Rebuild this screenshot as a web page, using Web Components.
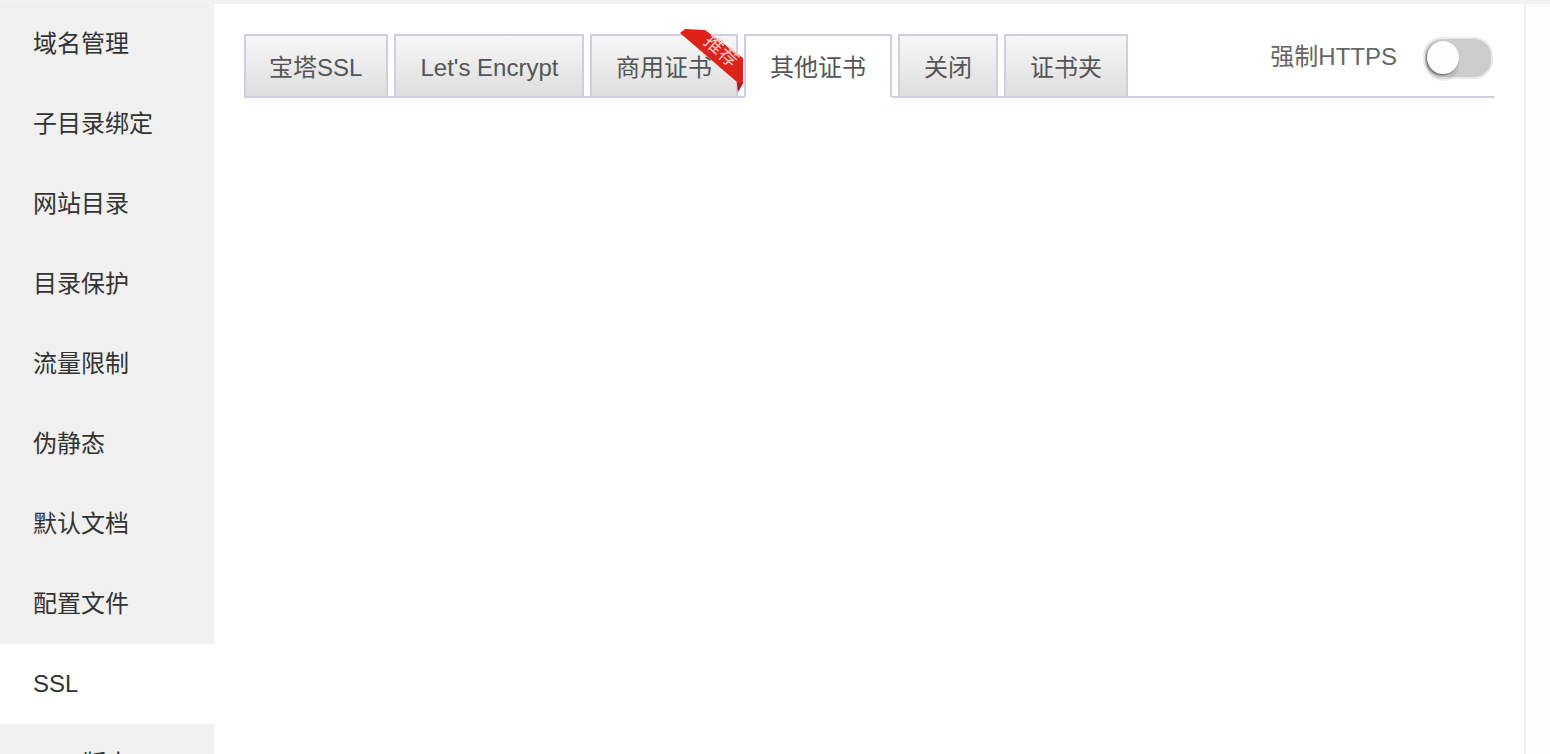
<!DOCTYPE html>
<html lang="zh-CN">
<head>
<meta charset="utf-8">
<title>SSL</title>
<style>
  html, body { margin: 0; height: 100%; background: #fcfcfc; overflow: hidden; }
  body { font-family: "Liberation Sans", "Noto Sans CJK SC", sans-serif; }
</style>
</head>
<body>
<site-panel>
  <side-item slot="nav">域名管理</side-item>
  <side-item slot="nav">子目录绑定</side-item>
  <side-item slot="nav">网站目录</side-item>
  <side-item slot="nav">目录保护</side-item>
  <side-item slot="nav">流量限制</side-item>
  <side-item slot="nav">伪静态</side-item>
  <side-item slot="nav">默认文档</side-item>
  <side-item slot="nav">配置文件</side-item>
  <side-item slot="nav" active>SSL</side-item>
  <side-item slot="nav">PHP版本</side-item>
  <tab-bar>
    <tab-item style="width: 144px; padding-left: 23px">宝塔SSL</tab-item>
    <tab-item style="padding: 0 23.5px 0 24.5px">Let's Encrypt</tab-item>
    <tab-item ribbon>商用证书</tab-item>
    <tab-item active>其他证书</tab-item>
    <tab-item>关闭</tab-item>
    <tab-item>证书夹</tab-item>
    <toggle-switch slot="end">强制HTTPS</toggle-switch>
  </tab-bar>
</site-panel>

<script>
class SitePanel extends HTMLElement {
  constructor() {
    super();
    this.attachShadow({ mode: "open" });
    this.shadowRoot.innerHTML = `
    <style>
      :host {
        display: flex;
        flex-direction: column;
        height: 754px;
        overflow: hidden;
      }
      .topLine {
        height: 4px;
        background: #f2f2f2;
        flex-shrink: 0;
      }
      .panel {
        display: flex;
        width: 1526px;
        height: 750px;
        box-sizing: border-box;
        background: #fff;
        border-right: 2px solid #eee;
      }
      nav {
        width: 214px;
        flex-shrink: 0;
        background: #f0f0f0;
      }
      main {
        flex: 1;
        padding: 30px 30px 0;
      }
    </style>
    <div class="topLine"></div>
    <div class="panel">
      <nav><slot name="nav"></slot></nav>
      <main><slot></slot></main>
    </div>
    `;
  }
}

class SideItem extends HTMLElement {
  constructor() {
    super();
    this.attachShadow({ mode: "open" });
    this.shadowRoot.innerHTML = `
    <style>
      :host {
        display: block;
        height: 80px;
        line-height: 80px;
        padding-left: 33px;
        font-size: 24px;
        color: #333;
        white-space: nowrap;
      }
      :host([active]) {
        background: #fff;
      }
    </style>
    <slot></slot>
    `;
  }
}

class TabBar extends HTMLElement {
  constructor() {
    super();
    this.attachShadow({ mode: "open" });
    this.shadowRoot.innerHTML = `
    <style>
      :host {
        display: flex;
        gap: 6px;
        height: 64px;
        box-sizing: border-box;
        border-bottom: 2px solid #cfcde0;
      }
      .end {
        margin-left: auto;
      }
    </style>
    <slot></slot>
    <div class="end"><slot name="end"></slot></div>
    `;
  }
}

class TabItem extends HTMLElement {
  constructor() {
    super();
    this.attachShadow({ mode: "open" });
    const ribbon = this.hasAttribute("ribbon") ? `
      <div class="ribbon">
        <svg width="66" height="68" viewBox="0 0 66 68">
          <path d="M0 5 L5 1 L25 2 L63 30 L63 55 L58 64 L57 54 Z" fill="#dc2219"/>
          <path d="M57 54 L63 55 L58 64 Z" fill="#b81a14"/>
        </svg>
        <span>推荐</span>
      </div>` : "";
    this.shadowRoot.innerHTML = `
    <style>
      :host {
        display: block;
        position: relative;
        height: 64px;
        box-sizing: border-box;
        padding: 0 24px;
        line-height: 64px;
        font-size: 24px;
        color: #555;
        white-space: nowrap;
        border: 2px solid #cfcde0;
        background: linear-gradient(#f7f7f7, #dedede);
      }
      :host([active]) {
        background: #fff;
        border-bottom-color: #fff;
      }
      .ribbon {
        position: absolute;
        left: 88px;
        top: -8px;
        width: 66px;
        height: 68px;
        line-height: normal;
      }
      .ribbon svg {
        display: block;
      }
      .ribbon span {
        position: absolute;
        left: 19px;
        top: 13px;
        width: 44px;
        text-align: center;
        font-size: 19px;
        line-height: 20px;
        color: #f6c4c1;
        transform: rotate(42deg);
      }
    </style>
    <slot></slot>${ribbon}
    `;
  }
}

class ToggleSwitch extends HTMLElement {
  constructor() {
    super();
    this.attachShadow({ mode: "open" });
    this.shadowRoot.innerHTML = `
    <style>
      :host {
        display: flex;
        align-items: flex-start;
        gap: 26px;
        margin-right: 1px;
        font-size: 24px;
        line-height: 46px;
        color: #666;
        white-space: nowrap;
      }
      .track {
        position: relative;
        margin-top: 3px;
        width: 66px;
        height: 38px;
        border-radius: 19px;
        background: #ccc;
        border: 2px solid #eaeaea;
      }
      .knob {
        position: absolute;
        left: 2px;
        top: 2px;
        width: 32px;
        height: 33px;
        border-radius: 50%;
        background: #fdfdfd;
        box-shadow: -1px 1px 2px rgba(0, 0, 0, .5), 0 7px 0 rgba(0, 0, 0, .07);
      }
    </style>
    <span><slot></slot></span>
    <div class="track"><div class="knob"></div></div>
    `;
  }
}

customElements.define("site-panel", SitePanel);
customElements.define("side-item", SideItem);
customElements.define("tab-bar", TabBar);
customElements.define("tab-item", TabItem);
customElements.define("toggle-switch", ToggleSwitch);
</script>
</body>
</html>
